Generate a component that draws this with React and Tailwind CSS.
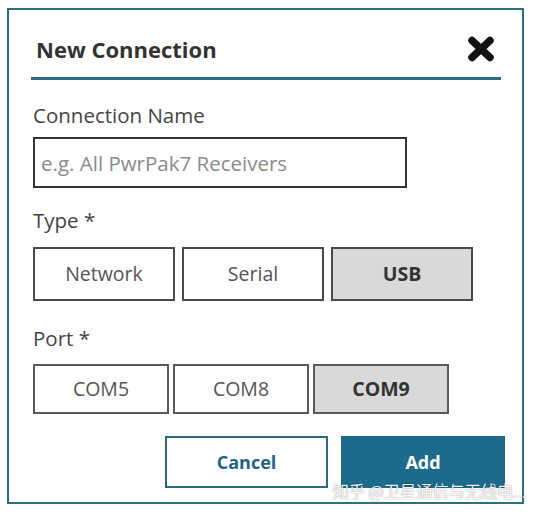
import { useState } from 'react';

const TYPES = ['Network', 'Serial', 'USB'];
const PORTS = ['COM5', 'COM8', 'COM9'];

// Bold close glyph in the dialog header
const CloseIcon = () => (
  <svg width="28" height="26" viewBox="0 0 28 26" fill="none">
    <path d="M5 4.5L23 21.5M23 4.5L5 21.5" stroke="#111" strokeWidth="7.5" strokeLinecap="round" />
  </svg>
);

const Choice = ({ label, active, onClick, className }) => (
  <button
    type="button"
    onClick={onClick}
    className={`${className} border-2 text-[19.5px] leading-none ${
      active ? 'bg-[#d9d9d9] font-bold text-[#333]' : 'bg-white text-[#555]'
    }`}
  >
    {label}
  </button>
);

export default function App() {
  const [name, setName] = useState('');
  const [type, setType] = useState('USB');
  const [port, setPort] = useState('COM9');

  return (
    <div className="min-h-[515px] bg-white pl-[7px] pt-[8px] font-['Open_Sans',sans-serif]">
      <div className="relative flex h-[496px] w-[517px] flex-col border-2 border-[#2b6f80] bg-white">
        {/* Header */}
        <div className="ml-[22px] mr-[21px] flex items-center justify-between border-b-[3px] border-[#2f6c80] pb-[13px] pl-[5px] pr-[6px] pt-[24px]">
          <h2 className="text-[22px] font-bold leading-[30px] text-[#333]">New Connection</h2>
          <button type="button" aria-label="Close">
            <CloseIcon />
          </button>
        </div>

        <div className="flex flex-col pl-[24px]">
          <label className="mt-[21px] text-[20.5px] leading-[28px] text-[#444]">Connection Name</label>
          <input
            value={name}
            onChange={(e) => setName(e.target.value)}
            placeholder="e.g. All PwrPak7 Receivers"
            className="mt-[8px] h-[51px] w-[374px] border-2 border-[#333] pl-[6px] text-[20.5px] text-[#333] outline-none placeholder:text-[#8a8a8a]"
          />

          <label className="mt-[18px] text-[20.5px] leading-[28px] text-[#444]">Type *</label>
          <div className="mt-[13px] flex gap-[7px]">
            {TYPES.map((t) => (
              <Choice
                key={t}
                label={t}
                active={type === t}
                onClick={() => setType(t)}
                className="h-[54px] w-[142px] border-[#4a4a4a]"
              />
            ))}
          </div>

          <label className="mt-[23px] text-[20.5px] leading-[28px] text-[#444]">Port *</label>
          <div className="mt-[12px] flex gap-[4px]">
            {PORTS.map((p) => (
              <Choice
                key={p}
                label={p}
                active={port === p}
                onClick={() => setPort(p)}
                className="h-[50px] w-[136px] border-[#5a5a5a]"
              />
            ))}
          </div>
        </div>

        {/* Actions */}
        <div className="mt-[22px] flex justify-end gap-[13px] pr-[17px]">
          <button
            type="button"
            className="h-[52px] w-[163px] border-2 border-[#2b6a80] bg-white text-[18px] font-bold text-[#1f6585]"
          >
            Cancel
          </button>
          <button type="button" className="h-[52px] w-[164px] bg-[#1c6a8c] text-[18px] font-bold text-white">
            Add
          </button>
        </div>

        <span className="pointer-events-none absolute right-[-4px] top-[473px] whitespace-nowrap font-['Noto_Sans_CJK_SC',sans-serif] text-[16.5px] leading-[17px] tracking-[-0.3px] text-white/95 [text-shadow:0_0_1px_rgba(0,0,0,0.35),0_0_2px_rgba(0,0,0,0.2)]">
          知乎 @卫星通信与无线电...
        </span>
      </div>
    </div>
  );
}
